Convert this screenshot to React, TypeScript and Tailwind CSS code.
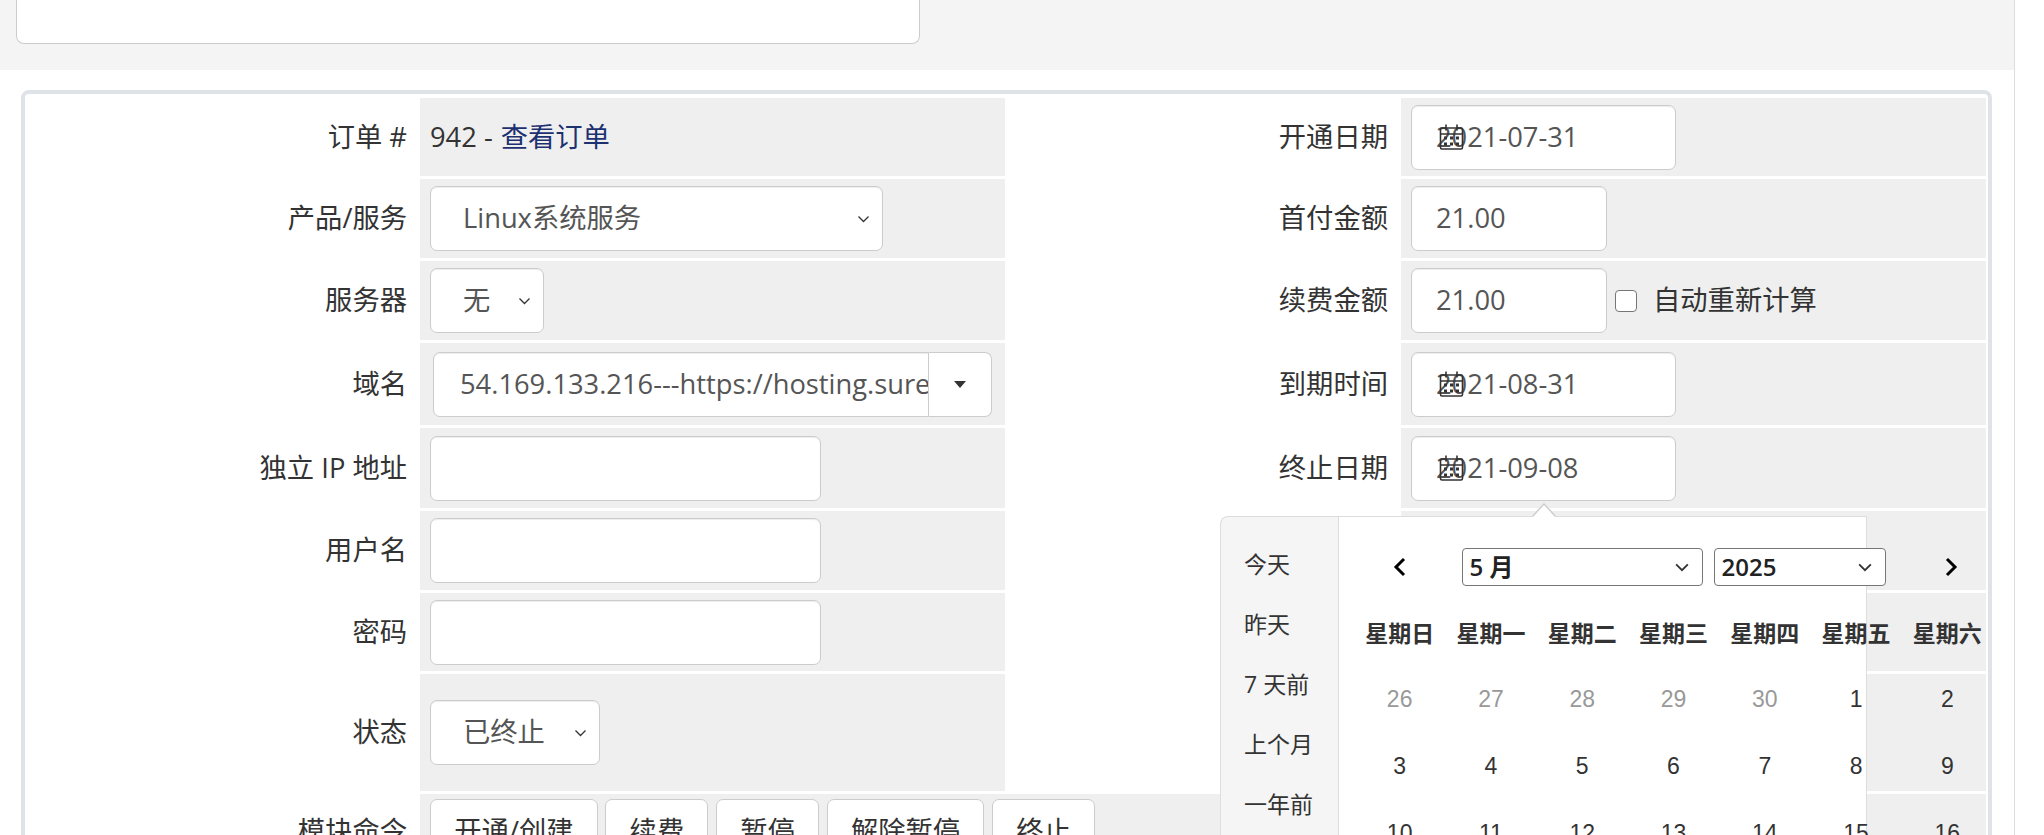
import React from "react";

function SelChevron({ className = "" }: { className?: string }) {
  return (
    <svg viewBox="0 0 13 8" className={className} fill="none" stroke="#333" strokeWidth={1.3}>
      <path d="M1.5 1.5L6.5 6.5L11.5 1.5" />
    </svg>
  );
}

function CalIcon() {
  return (
    <svg
      viewBox="0 0 25 27"
      className="absolute left-[27px] top-1/2 -translate-y-1/2 w-[25px] h-[27px]"
      fill="none"
      stroke="#333"
      strokeWidth={1.6}
    >
      <rect x="1.5" y="4.5" width="22" height="21" rx="1.5" />
      <path d="M1.5 10.5h22" />
      <path d="M7 1v6M18 1v6" />
      <g fill="#333" stroke="none">
        <rect x="5" y="13" width="3" height="3" />
        <rect x="11" y="13" width="3" height="3" />
        <rect x="17" y="13" width="3" height="3" />
        <rect x="5" y="19" width="3" height="3" />
        <rect x="11" y="19" width="3" height="3" />
        <rect x="17" y="19" width="3" height="3" />
      </g>
    </svg>
  );
}

function DateInput({ value }: { value: string }) {
  return (
    <div className="relative flex h-[65px] w-[265px] items-center rounded-[7px] border border-[#ccc] bg-white pl-[24px] text-[#555] shadow-[inset_0_1px_1px_rgba(0,0,0,0.075)]">
      <span>{value}</span>
      <CalIcon />
    </div>
  );
}

function TextInput({ value = "", w }: { value?: string; w: string }) {
  return (
    <div
      className={`flex h-[65px] items-center rounded-[7px] border border-[#ccc] bg-white pl-[24px] text-[#555] shadow-[inset_0_1px_1px_rgba(0,0,0,0.075)] ${w}`}
    >
      {value}
    </div>
  );
}

function Select({ value, w }: { value: string; w: string }) {
  return (
    <div
      className={`flex h-[65px] items-center justify-between rounded-[7px] border border-[#ccc] bg-white pl-[32px] pr-[12px] text-[#555] shadow-[inset_0_1px_1px_rgba(0,0,0,0.075)] ${w}`}
    >
      <span>{value}</span>
      <SelChevron className="h-[8px] w-[13px]" />
    </div>
  );
}

function Label({ children }: { children?: React.ReactNode }) {
  return <div className="flex items-center justify-end bg-white pr-[10px]">{children}</div>;
}

function Field({ children, className = "" }: { children?: React.ReactNode; className?: string }) {
  return <div className={`flex items-center bg-[#efefef] px-[10px] ${className}`}>{children}</div>;
}

function Btn({ children }: { children: React.ReactNode }) {
  return (
    <div className="flex h-[65px] shrink-0 items-center rounded-[7px] border border-[#ccc] bg-white px-[23.3px] text-[#333]">
      {children}
    </div>
  );
}

function CalSelect({ value, w }: { value: string; w: string }) {
  return (
    <div
      className={`flex h-[38px] items-center justify-between rounded-[4px] border border-[#767676] bg-white pl-[7px] pr-[12px] font-semibold text-[#222] ${w}`}
    >
      <span className="leading-none">{value}</span>
      <svg viewBox="0 0 16 10" className="h-[9px] w-[16px]" fill="none" stroke="#333" strokeWidth={2}>
        <path d="M1.5 1.5L8 8L14.5 1.5" />
      </svg>
    </div>
  );
}

function Popup() {
  const weekdays = ["星期日", "星期一", "星期二", "星期三", "星期四", "星期五", "星期六"];
  const rows: { d: number; off?: boolean }[][] = [
    [{ d: 26, off: true }, { d: 27, off: true }, { d: 28, off: true }, { d: 29, off: true }, { d: 30, off: true }, { d: 1 }, { d: 2 }],
    [{ d: 3 }, { d: 4 }, { d: 5 }, { d: 6 }, { d: 7 }, { d: 8 }, { d: 9 }],
    [{ d: 10 }, { d: 11 }, { d: 12 }, { d: 13 }, { d: 14 }, { d: 15 }, { d: 16 }],
    [{ d: 17 }, { d: 18 }, { d: 19 }, { d: 20 }, { d: 21 }, { d: 22 }, { d: 23 }],
  ];
  const ranges = ["今天", "昨天", "7 天前", "上个月", "一年前"];
  return (
    <div className="absolute left-[1220px] top-[516px] z-10 flex h-[420px] w-[647px] text-[23px] text-[#333]">
      <div className="absolute left-[312px] top-[-13px] h-0 w-0 border-x-[12px] border-b-[13px] border-x-transparent border-b-[#ccc]" />
      <div className="absolute left-[313px] top-[-11px] h-0 w-0 border-x-[11px] border-b-[12px] border-x-transparent border-b-white" />
      <div className="w-[119px] shrink-0 rounded-tl-[8px] border-l border-t border-r border-[#ddd] bg-[#f5f5f5] pt-[17px]">
        {ranges.map((r) => (
          <div key={r} className="flex h-[60px] items-center pl-[23px]">
            {r}
          </div>
        ))}
      </div>
      <div className="w-[528px] shrink-0 border-t border-r border-[#ddd] bg-white pl-[15px] pt-[18px]">
        <div className="w-[639px] font-['Liberation_Sans','Noto_Sans_CJK_SC',sans-serif]">
          <div className="grid h-[64px] grid-cols-[91.3px_456.5px_91.3px] items-center">
            <div className="flex justify-center">
              <svg viewBox="0 0 13 20" className="h-[20px] w-[13px]" fill="none" stroke="#000" strokeWidth={3}>
                <path d="M11 2L3 10l8 8" />
              </svg>
            </div>
            <div className="flex justify-center gap-[11px] font-['Open_Sans','Noto_Sans_CJK_SC',sans-serif] text-[24px]">
              <CalSelect value="5 月" w="w-[241px]" />
              <CalSelect value="2025" w="w-[172px]" />
            </div>
            <div className="flex justify-center pl-[8px]">
              <svg viewBox="0 0 13 20" className="h-[20px] w-[13px]" fill="none" stroke="#000" strokeWidth={3}>
                <path d="M2 2l8 8-8 8" />
              </svg>
            </div>
          </div>
          <div className="grid h-[67px] grid-cols-7 items-center font-['Noto_Sans_CJK_SC',sans-serif] font-bold">
            {weekdays.map((w) => (
              <div key={w} className="text-center">
                {w}
              </div>
            ))}
          </div>
          {rows.map((row, i) => (
            <div key={i} className="grid h-[67px] grid-cols-7 items-center">
              {row.map((c) => (
                <div key={c.d} className={`text-center ${c.off ? "text-[#999]" : "text-[#333]"}`}>
                  {c.d}
                </div>
              ))}
            </div>
          ))}
        </div>
      </div>
    </div>
  );
}

export default function App() {
  return (
    <div className="relative h-[835px] w-[2044px] overflow-hidden bg-white font-['Open_Sans','Noto_Sans_CJK_SC',sans-serif] text-[27.3px] text-[#333]">
      <div className="h-full w-[2015px] border-r border-[#dcdcdc]">
        <div className="h-[70px] bg-[#f4f4f4] pl-[16px]">
          <div className="h-[44px] w-[904px] rounded-b-[8px] border border-t-0 border-[#ccc] bg-white" />
        </div>
        <div className="pl-[21px] pt-[20px]">
          <div className="w-[1971px] rounded-[8px] border-[4px] border-[#dfe3e7] px-[2px] pt-[4px]">
            <div className="grid grid-cols-[2fr_3fr_2fr_3fr] grid-rows-[78px_79px_79px_82px_80px_79px_78px_117px_74px] gap-[3px]">
              <Label>订单 #</Label>
              <Field>
                <span>942 - </span>
                <span className="ml-[8px] text-[#1d3170]">查看订单</span>
              </Field>
              <Label>开通日期</Label>
              <Field>
                <DateInput value="2021-07-31" />
              </Field>

              <Label>产品/服务</Label>
              <Field>
                <Select value="Linux系统服务" w="w-[453px]" />
              </Field>
              <Label>首付金额</Label>
              <Field>
                <TextInput value="21.00" w="w-[196px]" />
              </Field>

              <Label>服务器</Label>
              <Field>
                <Select value="无" w="w-[114px]" />
              </Field>
              <Label>续费金额</Label>
              <Field>
                <TextInput value="21.00" w="w-[196px]" />
                <div className="ml-[8px] h-[22px] w-[22px] rounded-[4px] border-[1.5px] border-[#767676] bg-white" />
                <span className="ml-[16px]">自动重新计算</span>
              </Field>

              <Label>域名</Label>
              <Field>
                <div className="ml-[3px] flex h-[65px] w-[559px]">
                  <div className="flex min-w-0 flex-1 items-center overflow-hidden whitespace-nowrap rounded-l-[7px] border border-[#ccc] bg-white pl-[26px] text-[#555] shadow-[inset_0_1px_1px_rgba(0,0,0,0.075)]">
                    54.169.133.216---https://hosting.surehost.net
                  </div>
                  <div className="flex w-[63px] items-center justify-center rounded-r-[7px] border border-l-0 border-[#ccc] bg-white">
                    <div className="h-0 w-0 border-x-[6px] border-t-[7px] border-x-transparent border-t-[#333]" />
                  </div>
                </div>
              </Field>
              <Label>到期时间</Label>
              <Field>
                <DateInput value="2021-08-31" />
              </Field>

              <Label>独立 IP 地址</Label>
              <Field>
                <TextInput w="w-[391px]" />
              </Field>
              <Label>终止日期</Label>
              <Field>
                <DateInput value="2021-09-08" />
              </Field>

              <Label>用户名</Label>
              <Field>
                <TextInput w="w-[391px]" />
              </Field>
              <Label />
              <Field />

              <Label>密码</Label>
              <Field>
                <TextInput w="w-[391px]" />
              </Field>
              <Label />
              <Field />

              <Label>状态</Label>
              <Field>
                <Select value="已终止" w="w-[170px]" />
              </Field>
              <Label />
              <Field />

              <Label>模块命令</Label>
              <Field className="col-span-3 gap-[7.5px]">
                <Btn>开通/创建</Btn>
                <Btn>续费</Btn>
                <Btn>暂停</Btn>
                <Btn>解除暂停</Btn>
                <Btn>终止</Btn>
              </Field>
            </div>
          </div>
        </div>
      </div>
      <Popup />
    </div>
  );
}
